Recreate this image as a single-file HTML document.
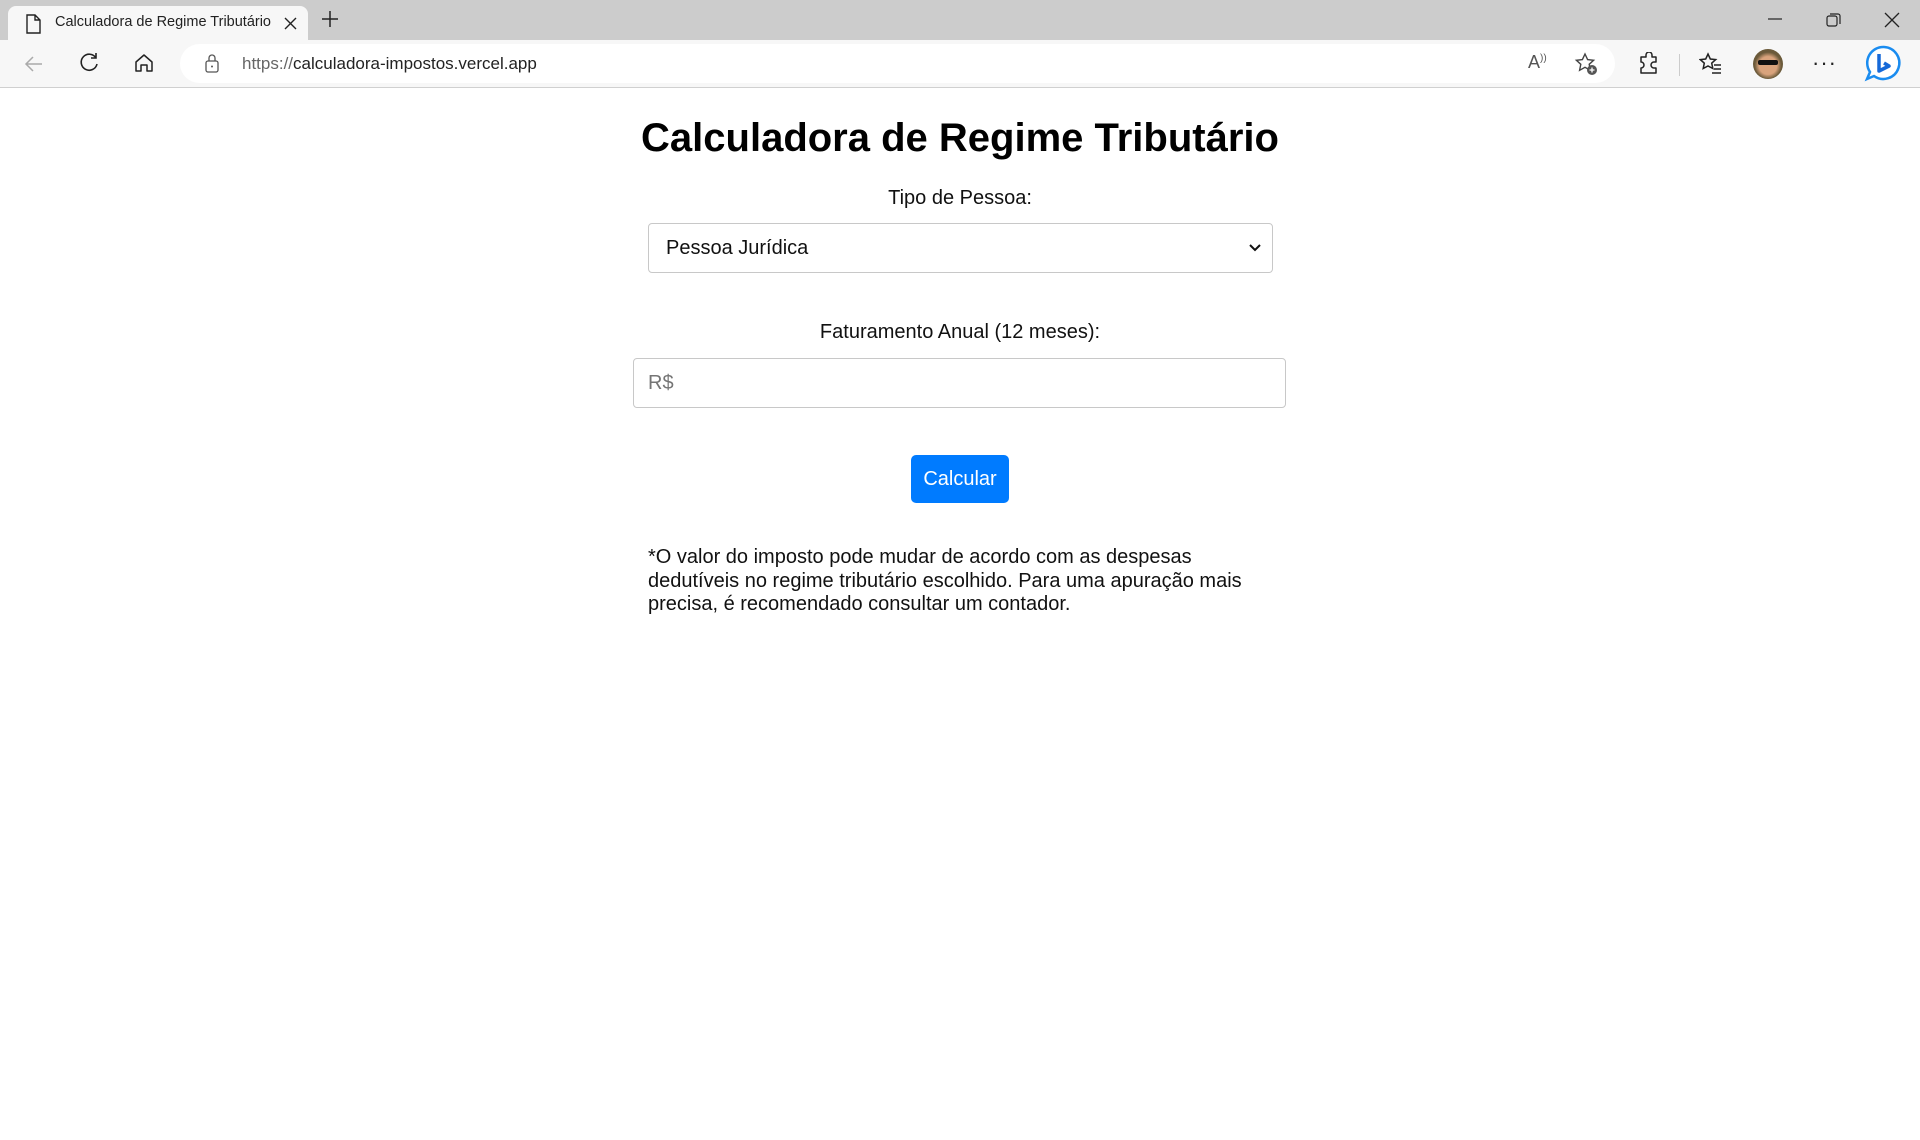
<!DOCTYPE html>
<html><head><meta charset="utf-8"><style>
*{box-sizing:border-box;margin:0;padding:0}
body{width:1920px;height:1140px;background:#fff;font-family:"Liberation Sans",Arial,sans-serif;position:relative;overflow:hidden}
.tabs{position:absolute;left:0;top:0;width:1920px;height:40px;background:#cccccc}
.tab{position:absolute;left:8px;top:6px;width:300px;height:34px;background:#f7f7f7;border-radius:8px 8px 0 0}
.tab span{position:absolute;left:47px;top:8px;font-size:14.5px;color:#222;white-space:nowrap;width:225px;overflow:hidden}
.bar{position:absolute;left:0;top:40px;width:1920px;height:48px;background:#f7f7f7;border-bottom:1px solid #d0d0d0}
.url{position:absolute;left:180px;top:4px;width:1435px;height:39px;background:#fff;border-radius:20px}
.url span{position:absolute;left:62px;top:9px;font-size:17px;color:#222}
.abs{position:absolute}
h1{position:absolute;left:0;width:1920px;top:116px;text-align:center;font-size:40px;font-weight:bold;color:#000}
.lbl{position:absolute;left:0;width:1920px;text-align:center;font-size:20px;color:#111}
.sel{position:absolute;left:648px;top:223px;width:625px;height:50px;border:1px solid #c8c8c8;border-radius:4px;font-size:20px;padding:13px 17px;color:#111}
.inp{position:absolute;left:633px;top:358px;width:653px;height:50px;border:1px solid #c8c8c8;border-radius:4px;font-size:20px;padding:13px 14px;color:#757575}
.btn{position:absolute;left:911px;top:455px;width:98px;height:48px;background:#007bff;border-radius:5px;color:#fff;font-size:20px;text-align:center;line-height:48px}
.note{position:absolute;left:648px;top:546px;width:625px;font-size:20px;line-height:23.5px;color:#111}
</style></head><body>
<div class="tabs">
 <div class="tab">
  <svg class="abs" style="left:16px;top:8px" width="18" height="20" viewBox="0 0 18 20"><path d="M3 1h8l5 5v13H3z M11 1v5h5" fill="none" stroke="#222" stroke-width="1.4"/></svg>
  <span>Calculadora de Regime Tributário</span>
  <svg class="abs" style="left:276px;top:11px" width="13" height="13"><path d="M1 1L12 12M12 1L1 12" stroke="#222" stroke-width="1.4"/></svg>
 </div>
 <svg class="abs" style="left:321px;top:10px" width="18" height="18"><path d="M9 1v16M1 9h16" stroke="#222" stroke-width="1.5"/></svg>
 <svg class="abs" style="left:1768px;top:14px" width="14" height="10"><path d="M0 5h14" stroke="#222" stroke-width="1.2"/></svg>
 <svg class="abs" style="left:1826px;top:12px" width="16" height="16"><rect x="1" y="4" width="10" height="10" rx="2" fill="none" stroke="#222" stroke-width="1.2"/><path d="M4 2h8a2 2 0 0 1 2 2v8" fill="none" stroke="#222" stroke-width="1.2"/></svg>
 <svg class="abs" style="left:1884px;top:12px" width="16" height="16"><path d="M1 1L15 15M15 1L1 15" stroke="#222" stroke-width="1.3"/></svg>
</div>
<div class="bar">
 <svg class="abs" style="left:24px;top:14px" width="20" height="20"><path d="M18 10H3M9 3L2 10l7 7" fill="none" stroke="#aaa" stroke-width="1.5"/></svg>
 <svg class="abs" style="left:78px;top:12px" width="22" height="22"><path d="M18 6A8 8 0 1 0 19 12M18 1v5h-5" fill="none" stroke="#222" stroke-width="1.6"/></svg>
 <svg class="abs" style="left:134px;top:13px" width="20" height="20"><path d="M2 9L10 2l8 7v9h-5v-6H7v6H2z" fill="none" stroke="#222" stroke-width="1.5" stroke-linejoin="round"/></svg>
 <div class="url">
  <svg class="abs" style="left:24px;top:10px" width="16" height="20"><rect x="2" y="7" width="12" height="11" rx="2" fill="none" stroke="#555" stroke-width="1.3"/><path d="M5 7V4a3 3 0 0 1 6 0v3" fill="none" stroke="#555" stroke-width="1.3"/><circle cx="8" cy="12.5" r="1" fill="#555"/></svg>
  <span style="top:10px"><span style="position:static;color:#666">https://</span>calculadora-impostos.vercel.app</span>
  <span style="left:1348px;top:8px;font-size:18px;color:#555">A<sup style="font-size:10px">))</sup></span>
  <svg class="abs" style="left:1394px;top:8px" width="24" height="24"><path d="M11 2l2.6 5.6 6 .7-4.4 4 1.2 6L11 15.3 5.6 18.3l1.2-6L2.4 8.3l6-.7z" fill="none" stroke="#444" stroke-width="1.4"/><circle cx="18" cy="18" r="5" fill="#555"/><path d="M18 15.5v5M15.5 18h5" stroke="#fff" stroke-width="1.3"/></svg>
 </div>
 <svg class="abs" style="left:1637px;top:12px" width="24" height="24"><path d="M9 3a3 3 0 0 1 6 0v2h4v5h-2a3 3 0 0 0 0 6h2v5H4v-5a3 3 0 0 0 0-6V5h5z" fill="none" stroke="#222" stroke-width="1.5" stroke-linejoin="round"/></svg>
 <div class="abs" style="left:1679px;top:14px;width:1px;height:22px;background:#ccc"></div>
 <svg class="abs" style="left:1699px;top:12px" width="24" height="24"><path d="M9 2l2.3 5 5.4.6-4 3.6 1.1 5.3L9 14l-4.8 2.5 1.1-5.3-4-3.6 5.4-.6z" fill="none" stroke="#222" stroke-width="1.5"/><path d="M15 13h7M15 17h7M13 21h9" stroke="#222" stroke-width="1.5"/></svg>
 <div class="abs" style="left:1753px;top:9px;width:30px;height:30px;border-radius:50%;background:radial-gradient(circle at 50% 55%,#d9a37c 0 40%,#6b5a3a 60%)"></div>
 <div class="abs" style="left:1758px;top:20px;width:20px;height:5px;background:#111;border-radius:2px"></div>
 <span class="abs" style="left:1812px;top:10px;font-size:22px;color:#222;letter-spacing:1px">···</span>
 <svg class="abs" style="left:1864px;top:4px" width="40" height="40"><path d="M20 3a16 16 0 1 1-10 29l-7 3 3-7A16 16 0 0 1 20 3z" fill="#fff" stroke="#1a8cf0" stroke-width="2.5"/><path d="M15 10v17l10-5-5-3" fill="none" stroke="#1669d8" stroke-width="3.5" stroke-linejoin="round"/></svg>
</div>
<h1>Calculadora de Regime Tributário</h1>
<div class="lbl" style="top:187px">Tipo de Pessoa:</div>
<div class="sel">Pessoa Jurídica
 <svg class="abs" style="left:600px;top:20px" width="12" height="9"><path d="M1 1l5 5 5-5" fill="none" stroke="#111" stroke-width="2"/></svg>
</div>
<div class="lbl" style="top:321px">Faturamento Anual (12 meses):</div>
<div class="inp">R$</div>
<div class="btn">Calcular</div>
<div class="note">*O valor do imposto pode mudar de acordo com as despesas dedutíveis no regime tributário escolhido. Para uma apuração mais precisa, é recomendado consultar um contador.</div>
</body></html>
